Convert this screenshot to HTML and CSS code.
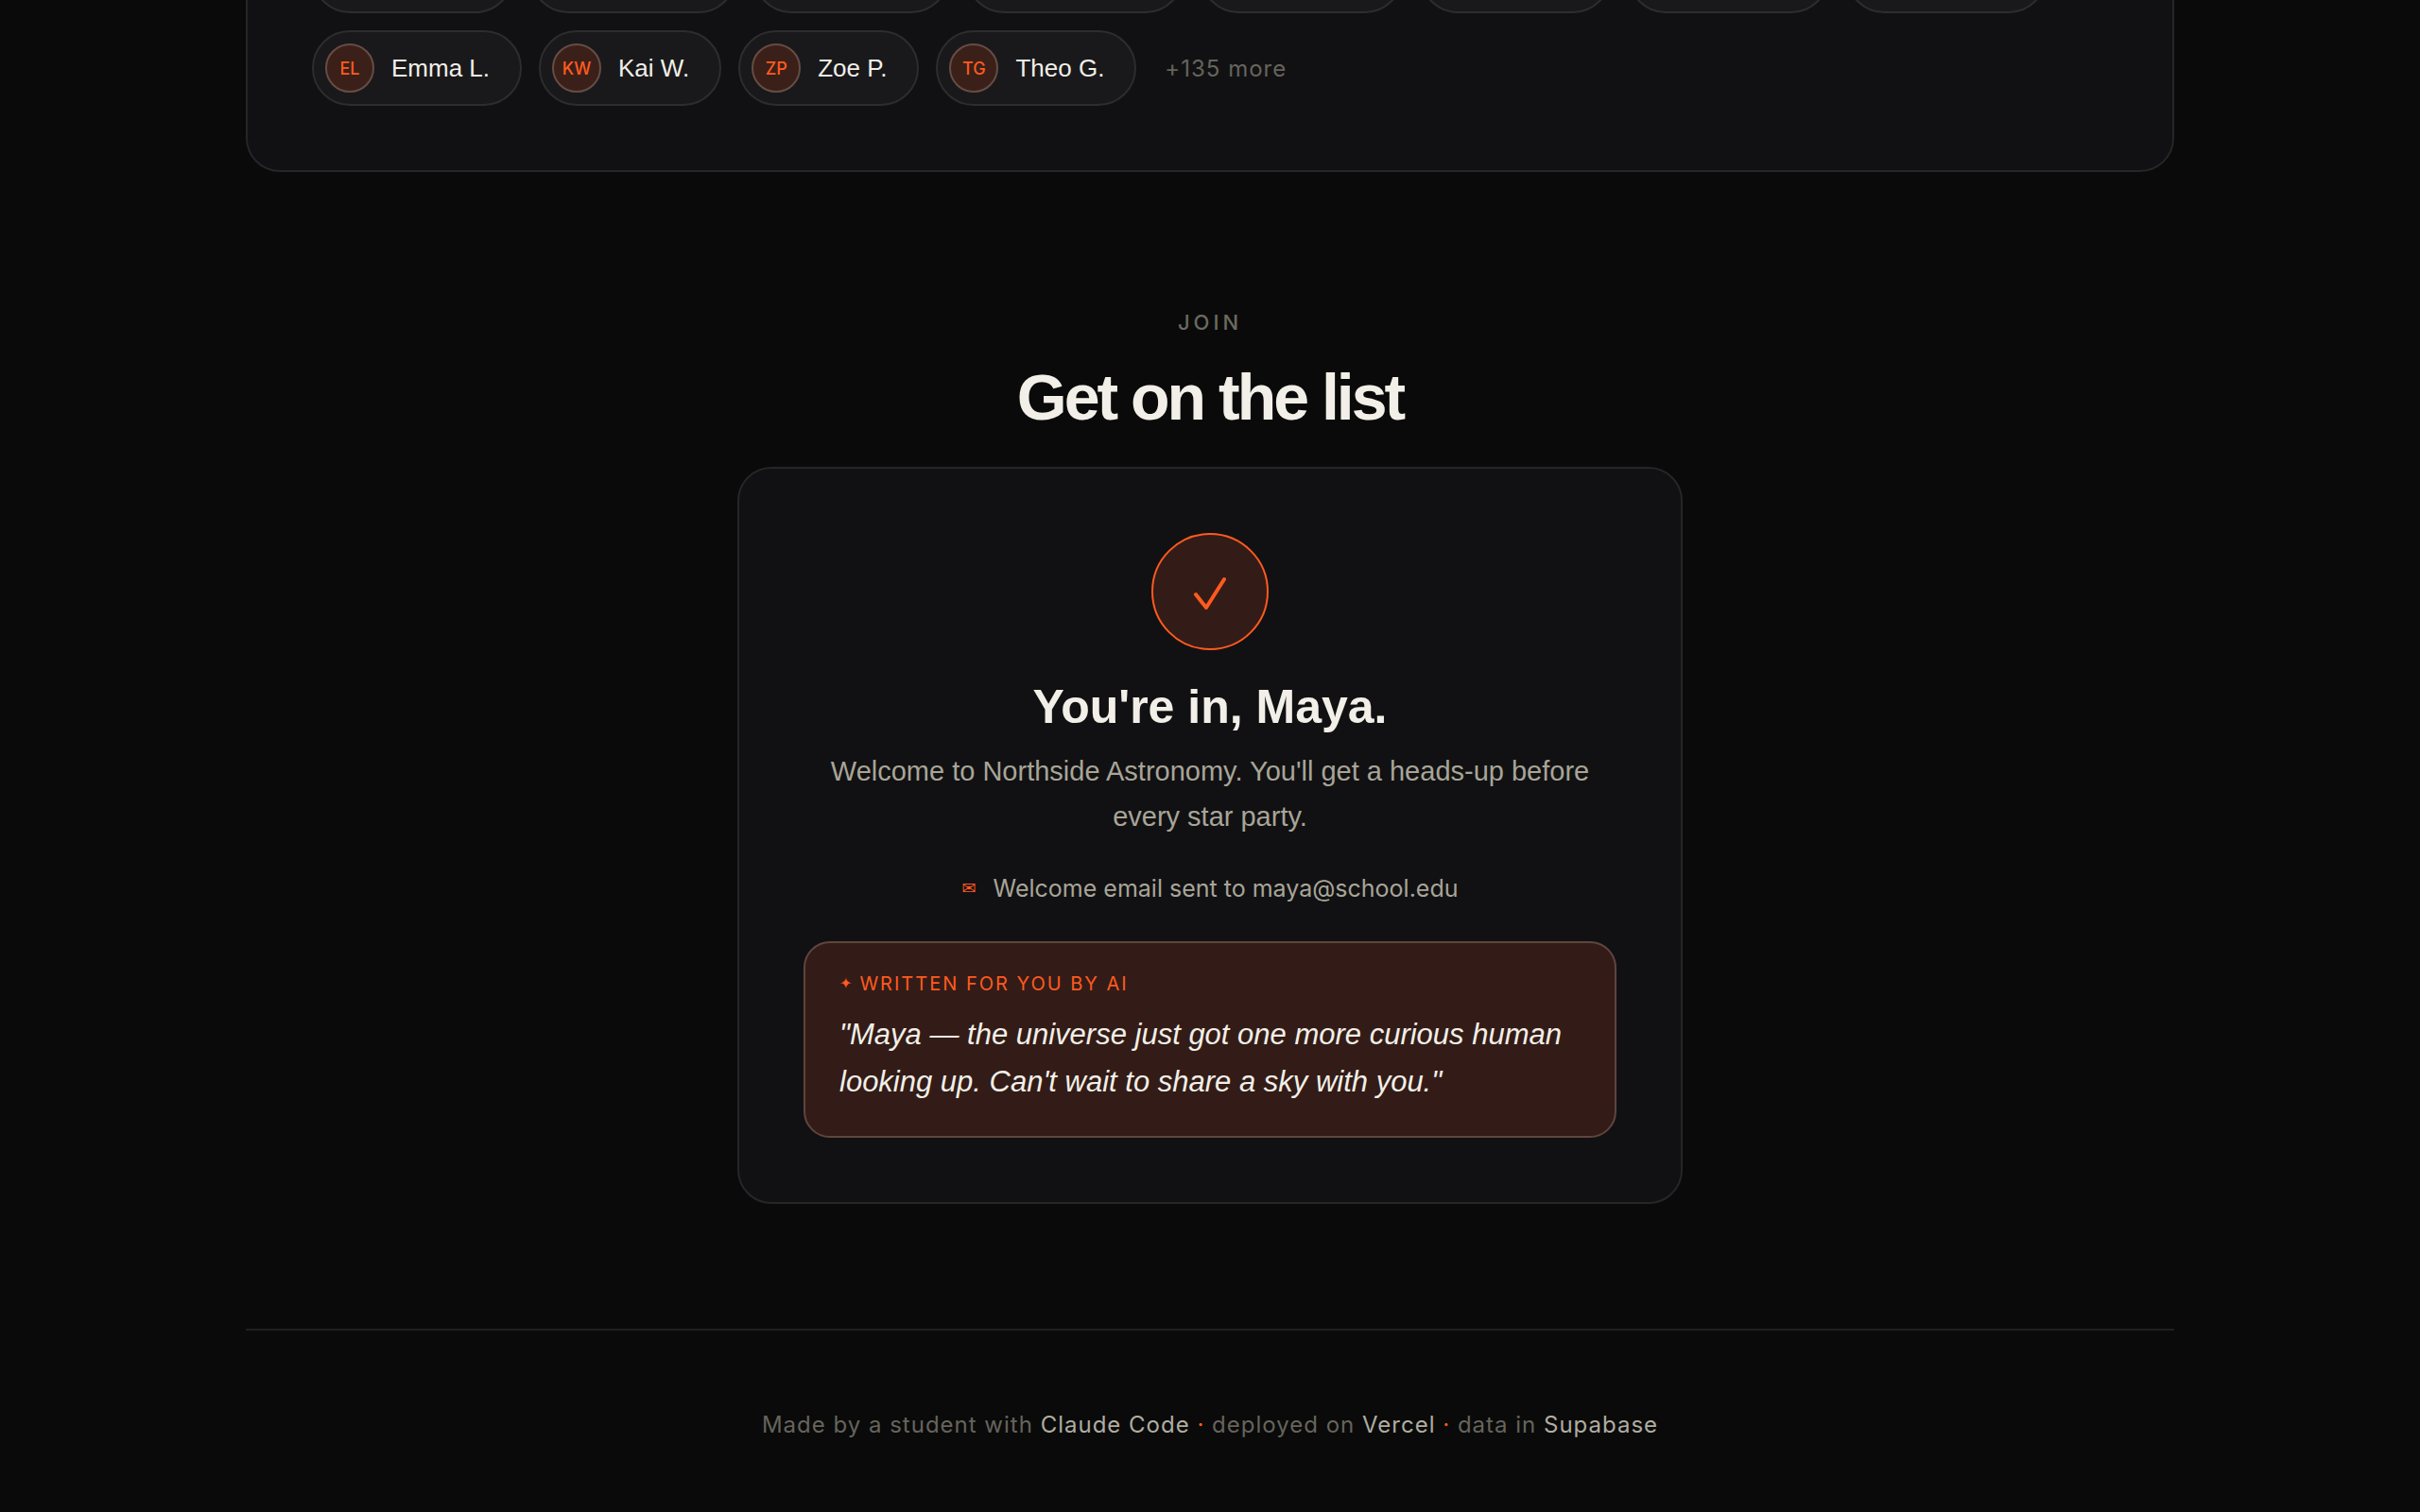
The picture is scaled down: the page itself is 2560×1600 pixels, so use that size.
FILE: index.html
```html
<!DOCTYPE html>
<html lang="en">
<head>
  <meta charset="UTF-8">
  <title>Northside Astronomy</title>
  <link rel="stylesheet" href="styles.css">
</head>
<body>

<div class="wrap">
  <section class="members">
    <ul class="chips">
      <li class="chip"></li>
      <li class="chip"></li>
      <li class="chip"></li>
      <li class="chip"></li>
      <li class="chip"></li>
      <li class="chip"></li>
      <li class="chip"></li>
      <li class="chip"></li>
      <li class="chip"><span class="avatar">EL</span>Emma L.</li>
      <li class="chip"><span class="avatar">KW</span>Kai W.</li>
      <li class="chip"><span class="avatar">ZP</span>Zoe P.</li>
      <li class="chip"><span class="avatar">TG</span>Theo G.</li>
      <li class="more">+135 more</li>
    </ul>
  </section>

  <section class="join">
    <p class="eyebrow">Join</p>
    <h2>Get on the list</h2>

    <div class="card">
      <div class="check">
        <svg viewBox="0 0 44 44" width="44" height="44" fill="none" stroke="currentColor" stroke-width="4" stroke-linecap="round" stroke-linejoin="round">
          <path d="M7 25 L18 39 L37 9"/>
        </svg>
      </div>
      <h3>You're in, Maya.</h3>
      <p class="welcome">Welcome to Northside Astronomy. You'll get a heads-up before every star party.</p>
      <p class="sent"><span class="mail">✉</span>Welcome email sent to maya@school.edu</p>
      <div class="note">
        <p class="note-label"><span class="star">✦</span>Written for you by AI</p>
        <p class="quote">"Maya — the universe just got one more curious human looking up. Can't wait to share a sky with you."</p>
      </div>
    </div>
  </section>

  <footer>
    Made by a student with <b>Claude Code</b> <i>·</i> deployed on <b>Vercel</b> <i>·</i> data in <b>Supabase</b>
  </footer>
</div>

</body>
</html>
```
FILE: styles.css
```css
* {
  box-sizing: border-box;
}
body {
  margin: 0;
  background: #0a0a0a;
  color: #f2efe8;
  font-family: "Liberation Sans", Arial, sans-serif;
}
p, h2, h3, ul {
  margin: 0;
  padding: 0;
}
.wrap {
  max-width: 2040px;
  margin: 0 auto;
  display: flow-root;
}

/* members */
.members {
  /* first row runs off the top of the page */
  margin-top: -136px;
  padding: 68px;
  background: #111113;
  border: 2px solid #262628;
  border-radius: 36px;
}
.chips {
  display: flex;
  flex-wrap: wrap;
  align-items: center;
  gap: 18px;
  list-style: none;
}
.chip {
  display: flex;
  align-items: center;
  gap: 18px;
  height: 80px;
  padding: 0 32px 0 12px;
  background: #19191b;
  border: 2px solid #2d2d2f;
  border-radius: 40px;
  font-size: 26px;
}
.chip:nth-child(1) { width: 213px; }
.chip:nth-child(2) { width: 218px; }
.chip:nth-child(3) { width: 207px; }
.chip:nth-child(4) { width: 230px; }
.chip:nth-child(5) { width: 214px; }
.chip:nth-child(6) { width: 202px; }
.chip:nth-child(7) { width: 213px; }
.chip:nth-child(8) { width: 212px; }
.avatar {
  display: flex;
  align-items: center;
  justify-content: center;
  width: 52px;
  height: 52px;
  background: #3a2019;
  border: 2px solid #664c44;
  border-radius: 50%;
  color: #ff5a1f;
  font-family: Inter, sans-serif;
  font-size: 18px;
  font-weight: 500;
}
.more {
  padding-left: 12px;
  color: #66645c;
  font-family: Inter, sans-serif;
  font-size: 24px;
  letter-spacing: 1px;
}

/* join */
.join {
  display: flex;
  flex-direction: column;
  align-items: center;
  padding-top: 144px;
  text-align: center;
}
.eyebrow {
  color: #6b6a61;
  font-family: Inter, sans-serif;
  font-size: 22px;
  font-weight: 500;
  line-height: 30px;
  letter-spacing: 4px;
  text-transform: uppercase;
}
h2 {
  margin-top: 24px;
  font-size: 68px;
  line-height: 80px;
  letter-spacing: -3px;
}
.card {
  width: 100%;
  max-width: 1000px;
  margin-top: 34px;
  padding: 68px;
  background: #111113;
  border: 2px solid #262628;
  border-radius: 36px;
}
.check {
  display: flex;
  align-items: center;
  justify-content: center;
  width: 124px;
  height: 124px;
  margin: 0 auto;
  background: #331c17;
  border: 2px solid #ff5a1f;
  border-radius: 50%;
  color: #ff5a1f;
}
h3 {
  margin-top: 30px;
  font-size: 50px;
  line-height: 60px;
}
.welcome {
  margin-top: 14px;
  padding: 0 24px;
  color: #a8a598;
  font-size: 29px;
  line-height: 48px;
}
.sent {
  display: flex;
  align-items: center;
  justify-content: center;
  gap: 18px;
  margin-top: 32px;
  color: #a8a598;
  font-family: Inter, sans-serif;
  font-size: 25px;
  line-height: 40px;
}
.mail {
  color: #ff5a1f;
  font-family: "DejaVu Sans", sans-serif;
  font-size: 18px;
}
.note {
  margin-top: 36px;
  padding: 28px 36px 32px;
  background: #331c17;
  border: 2px solid #5f453e;
  border-radius: 28px;
  text-align: left;
}
.note-label {
  display: flex;
  align-items: center;
  gap: 6px;
  color: #ff5a1f;
  font-family: Inter, sans-serif;
  font-size: 20px;
  line-height: 30px;
  letter-spacing: 2px;
  text-transform: uppercase;
}
.star {
  font-family: "DejaVu Sans", sans-serif;
  font-size: 16px;
}
.quote {
  margin-top: 14px;
  font-size: 31px;
  font-style: italic;
  line-height: 50px;
}

footer {
  margin-top: 132px;
  padding: 82px 0 72px;
  border-top: 2px solid #202020;
  color: #66645c;
  font-family: Inter, sans-serif;
  font-size: 24px;
  line-height: 36px;
  letter-spacing: 1px;
  text-align: center;
}
footer b {
  color: #b0ada1;
  font-weight: 400;
}
footer i {
  color: #ff5a1f;
  font-style: normal;
}
```
